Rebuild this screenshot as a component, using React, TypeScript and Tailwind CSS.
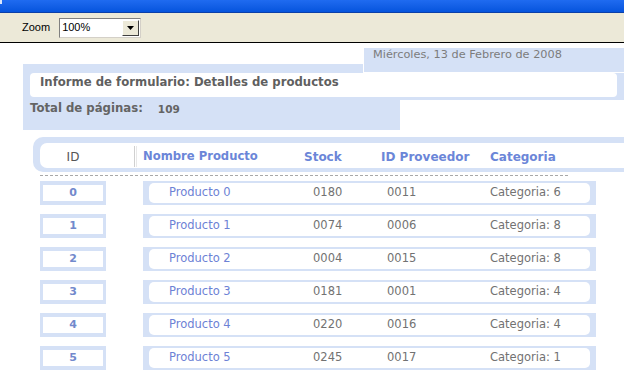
import React from 'react';

const rows = [
  { id: 0, stock: '0180', prov: '0011', cat: 6 },
  { id: 1, stock: '0074', prov: '0006', cat: 8 },
  { id: 2, stock: '0004', prov: '0015', cat: 8 },
  { id: 3, stock: '0181', prov: '0001', cat: 4 },
  { id: 4, stock: '0220', prov: '0016', cat: 4 },
  { id: 5, stock: '0245', prov: '0017', cat: 1 },
];

export default function App() {
  return (
    <div className="w-[624px] h-[377px] overflow-hidden bg-white font-['DejaVu_Sans',Verdana,sans-serif]">
      {/* title bar remnant */}
      <div className="h-[13px] bg-gradient-to-b from-[#1f6bf0] to-[#0554dd] border-b border-[#0b3fa8] relative">
        <div className="absolute left-0 top-0 w-[2px] h-[4px] bg-[#dbe6fb]" />
      </div>

      {/* toolbar */}
      <div className="h-[30px] bg-[#ece9d8] border-b border-black flex items-center pl-[22px] font-['Liberation_Sans',Arial,sans-serif] text-[11px] text-black">
        <span>Zoom</span>
        <div className="ml-[9px] w-[82px] h-[20px] bg-white border border-t-[#808080] border-l-[#808080] border-r-[#d4d0c8] border-b-[#d4d0c8] flex items-center">
          <span className="pl-[2px] flex-1 leading-none">100%</span>
          <div className="w-[17px] h-[16px] mr-[1px] bg-[#ece9d8] border border-t-white border-l-white border-r-[#404040] border-b-[#404040] flex items-center justify-center">
            <svg width="7" height="4" viewBox="0 0 7 4">
              <path d="M0 0h7L3.5 4z" fill="#000" />
            </svg>
          </div>
        </div>
      </div>

      <div className="pl-[23px]">
        {/* date */}
        <div className="mt-[5px] flex justify-end relative z-10">
          <div className="w-[261px] h-[25px] bg-[#d5e1f6] border-l border-b border-white pl-[9px] text-[11.3px] leading-[14px] text-[#7c7c7c]">
            Miércoles, 13 de Febrero de 2008
          </div>
        </div>

        {/* report title */}
        <div className="-mt-[9px] bg-[#d5e1f6] pt-[9px] pb-[3px] pl-[7px] pr-[7px]">
          <div className="h-[24px] bg-white rounded-[4px] pl-[10px] pt-[2px] text-[11.7px] leading-[15px] font-bold text-[#5f5f5f]">
            Informe de formulario: Detalles de productos
          </div>
        </div>

        {/* total */}
        <div className="w-[377px] h-[30px] bg-[#d5e1f6] pl-[7px] pt-[1px] flex items-start font-bold text-[#646464]">
          <span className="text-[11.7px] leading-[14px]">Total de páginas:</span>
          <span className="ml-[15px] text-[10.5px] leading-[17px]">109</span>
        </div>

        {/* table header */}
        <div className="mt-[7px] ml-[10px] h-[35px] bg-[#d5e1f6] rounded-l-[10px] pt-[6px] pl-[7px]">
          <div className="h-[25px] bg-white rounded-l-[7px] pt-[2px] flex items-center text-[12px]">
            <div className="w-[66px] text-center text-[#555]">ID</div>
            <div className="ml-[28px] w-[3px] h-[21px] border-l border-r border-l-[#d0d0d0] border-r-[#e8e8e8]" />
            <div className="ml-[6px] w-[161px] font-bold text-[#6b86d8] text-[11.6px]">Nombre Producto</div>
            <div className="w-[77px] font-bold text-[#6b86d8]">Stock</div>
            <div className="w-[109px] font-bold text-[#6b86d8]">ID Proveedor</div>
            <div className="font-bold text-[#6b86d8]">Categoria</div>
          </div>
        </div>
        <div className="ml-[17px] mt-[3px] w-[528px] border-t border-dashed border-[#a8a8a8]" />

        {/* rows */}
        <div className="mt-[5px] ml-[17px] flex flex-col gap-[9px]">
          {rows.map((r) => (
            <div key={r.id} className="flex items-start">
              <div className="w-[66px] h-[24px] bg-[#d5e1f6] px-[3px] py-[4px]">
                <div className="h-full bg-white flex items-center justify-center text-[11px] font-bold text-[#7289cc]">
                  {r.id}
                </div>
              </div>
              <div className="ml-[37px] w-[453px] h-[24px] bg-[#d5e1f6] pl-[6px] pr-[6px] pt-[2px] pb-[2px]">
                <div className="h-full bg-white rounded-[5px] flex items-center text-[11.5px] text-[#727272]">
                  <div className="pl-[20px] w-[164px] text-[#6d82d5]">Producto {r.id}</div>
                  <div className="w-[74px]">{r.stock}</div>
                  <div className="w-[103px]">{r.prov}</div>
                  <div>Categoria: {r.cat}</div>
                </div>
              </div>
            </div>
          ))}
        </div>
      </div>
    </div>
  );
}
